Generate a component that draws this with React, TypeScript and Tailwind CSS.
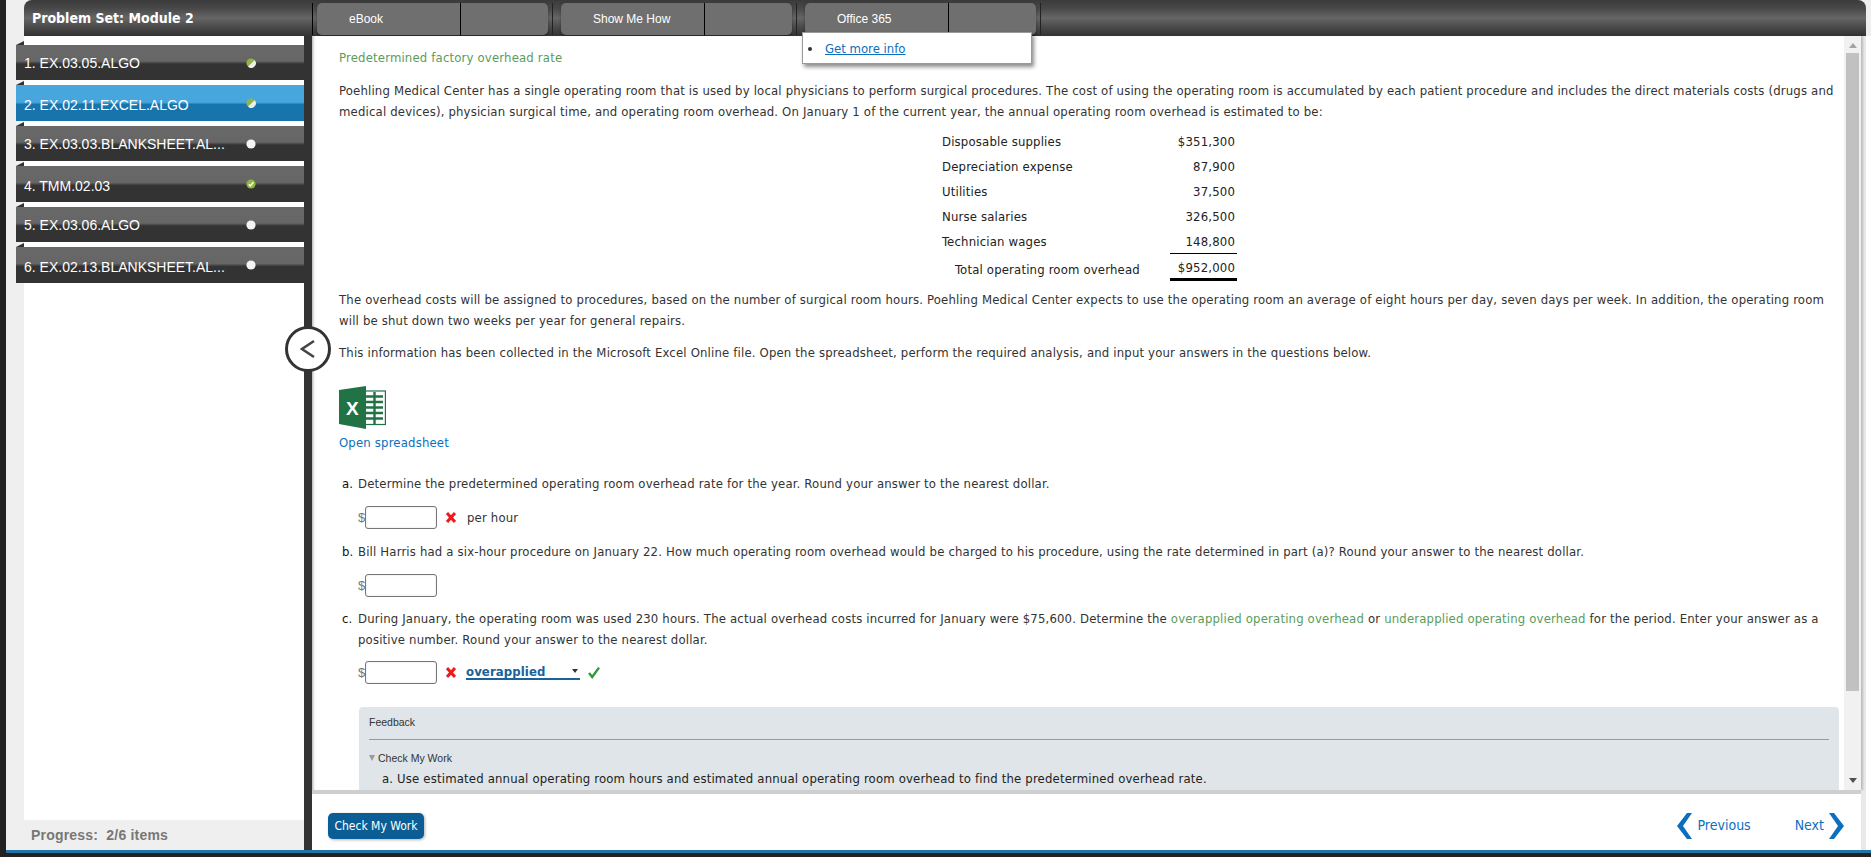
import React from "react";

const tahoma = "font-['DejaVu_Sans_Condensed','DejaVu_Sans',sans-serif]";
const arial = "font-['Liberation_Sans',Arial,sans-serif]";

function Dot({ kind }: { kind: "half" | "none" | "done" }) {
  return (
    <svg width="10" height="10" viewBox="0 0 10 10" className="shrink-0">
      {kind === "none" && <circle cx="5" cy="5" r="4.6" fill="#f4f4f4" />}
      {kind === "half" && (
        <>
          <circle cx="5" cy="5" r="4.6" fill="#8fb73e" />
          <path d="M8.6 2.2A4.6 4.6 0 0 1 2 8.6Z" fill="#eeeeee" />
        </>
      )}
      {kind === "done" && (
        <>
          <circle cx="5" cy="5" r="4.6" fill="#8fb73e" />
          <path d="M2.8 5.2L4.4 6.9L7.4 3.2" fill="none" stroke="#fff" strokeWidth="1.5" />
        </>
      )}
    </svg>
  );
}

const items: { t: string; k: "half" | "none" | "done"; h: string; pt: string; active?: boolean }[] = [
  { t: "1. EX.03.05.ALGO", k: "half", h: "h-[35px]", pt: "pt-px" },
  { t: "2. EX.02.11.EXCEL.ALGO", k: "half", h: "h-[36px]", pt: "pt-[4px]", active: true },
  { t: "3. EX.03.03.BLANKSHEET.AL...", k: "none", h: "h-[35px]", pt: "pt-px" },
  { t: "4. TMM.02.03", k: "done", h: "h-[36px]", pt: "pt-[4px]" },
  { t: "5. EX.03.06.ALGO", k: "none", h: "h-[35px]", pt: "pt-px" },
  { t: "6. EX.02.13.BLANKSHEET.AL...", k: "none", h: "h-[36px]", pt: "pt-[4px]" },
];

function SideItem({ t, k, h, pt, active }: (typeof items)[number]) {
  return (
    <div className="-ml-2 mt-[1px]">
      <div className="h-0 w-0 border-b-[4px] border-l-[8px] border-b-[#333] border-l-transparent" />
      <div
        className={`${h} flex items-center ${
          active
            ? "bg-[linear-gradient(#48a6de_0%,#48a6de_48%,#1874ad_54%,#1874ad_100%)]"
            : "bg-[linear-gradient(#686868_0%,#666666_46%,#333333_54%,#333333_100%)]"
        }`}
      >
        <div className={`w-[230px] shrink-0 pl-2 text-[14px] leading-none text-white ${pt}`}>{t}</div>
        <Dot kind={k} />
      </div>
    </div>
  );
}

function Tab({ label }: { label: string }) {
  return (
    <div className="mt-[2px] flex h-8 w-[231px] shrink-0 rounded-[5px] bg-[#6f6f6f] text-[12px] text-white shadow-[0_1px_3px_rgba(0,0,0,0.35)]">
      <div className="flex w-[144px] items-center border-r border-black pl-8">{label}</div>
    </div>
  );
}

function Sep() {
  return <div className="ml-[4px] mr-[8px] mt-[2px] h-8 w-px shrink-0 bg-[#222]" />;
}

function RedX() {
  return (
    <svg width="10" height="11" viewBox="0 0 10 11" className="shrink-0">
      <path d="M1 1L9 10M9 1L1 10" stroke="#f01a1a" strokeWidth="3" />
    </svg>
  );
}

function Answer() {
  return (
    <div className="flex items-center">
      <span className={`${arial} w-[7px] text-[13px] text-[#777]`}>$</span>
      <div className="h-[23px] w-[72px] rounded-[3px] border border-[#767676] bg-white shadow-[inset_0_0_2px_rgba(0,0,0,0.15)]" />
    </div>
  );
}

function Row({ label, v, indent, cls, tall }: { label: string; v: string; indent?: boolean; cls?: string; tall?: boolean }) {
  return (
    <tr className={tall ? "h-[27px]" : "h-[25px]"}>
      <td className={`w-[228px] p-0 ${indent ? "pl-[13px] pt-[3px]" : ""}`}>{label}</td>
      <td className={`w-[67px] p-0 pr-0.5 text-right ${tall ? "pt-[2px]" : ""} ${cls ?? ""}`}>{v}</td>
    </tr>
  );
}

function Question({ mark, className, children }: { mark: string; className: string; children: React.ReactNode }) {
  return (
    <div className={`ml-[3px] flex ${className}`}>
      <span className="w-4 shrink-0 text-[#111]">{mark}</span>
      <p className="min-w-0 flex-1">{children}</p>
    </div>
  );
}

function Excel() {
  return (
    <svg width="47" height="43" viewBox="0 0 47 43">
      <rect x="24" y="5" width="22.4" height="33.5" fill="#fff" stroke="#217346" strokeWidth="1.2" />
      <path d="M27 10.5h17M27 16h17M27 21.5h17M27 27h17M27 32.5h17M35.5 6v32" stroke="#217346" strokeWidth="2.4" />
      <path d="M0 4L27 0V43L0 38Z" fill="#217346" />
      <text x="7" y="28.5" fontSize="19" fontWeight="700" fill="#fff" fontFamily="Liberation Sans, sans-serif">X</text>
    </svg>
  );
}

export default function App() {
  return (
    <div className={`${tahoma} flex h-screen w-full flex-col overflow-hidden bg-[#222]`}>
      <div className="flex min-h-0 flex-1">
        <div className="w-[6px] shrink-0 bg-[#222]" />
        <div className="flex min-w-0 flex-1 flex-col">
          <div className="relative flex min-h-0 flex-1 flex-col bg-white">
            {/* header */}
            <div className="flex h-9 shrink-0 bg-[#efefef] pl-[18px]">
              <div className="mr-[5px] flex min-w-0 flex-1 items-center rounded-tl-lg rounded-tr-lg bg-[linear-gradient(#3a3a3a_0%,#4a4a4a_25%,#666666_50%,#4a4a4a_75%,#333333_100%)]">
                <div className="w-[288px] shrink-0 pl-2 text-[14px] font-bold text-white">Problem Set: Module 2</div>
                <div className="mt-[2px] h-8 w-px shrink-0 bg-black" />
                <div className={`${arial} ml-1 flex items-center`}>
                  <Tab label="eBook" />
                  <Sep />
                  <Tab label="Show Me How" />
                  <Sep />
                  <Tab label="Office 365" />
                  <Sep />
                </div>
              </div>
            </div>

            {/* body */}
            <div className="flex min-h-0 flex-1">
              {/* sidebar */}
              <div className="flex w-[298px] shrink-0 flex-col bg-[#efefef]">
                <div className="ml-[18px] flex min-h-0 flex-1 flex-col bg-white pt-1">
                  <div className={`${arial} flex flex-col`}>
                    {items.map((i) => (
                      <SideItem key={i.t} {...i} />
                    ))}
                  </div>
                </div>
                <div className={`${arial} flex h-[30px] shrink-0 items-center pl-[25px] text-[14px] font-bold tracking-[0.2px] text-[#777]`}>
                  Progress:&nbsp; 2/6 items
                </div>
              </div>
              <div className="w-2 shrink-0 bg-[#333]" />

              {/* main */}
              <div className="mr-[5px] flex min-w-0 flex-1 flex-col bg-[#e9e9e9] pr-[5px]">
                <div className="flex min-h-0 flex-1 bg-white shadow-[inset_3px_0_3px_-2px_rgba(0,0,0,0.35)]">
                  <div className="min-w-0 flex-1 overflow-hidden pl-[27px] pr-[2px] pt-[11px] text-[13px] leading-[21px] tracking-[0.17px] text-[#333]">
                    <p className="text-[#5b9c5b]">Predetermined factory overhead rate</p>
                    <p className="mt-[12px]">
                      Poehling Medical Center has a single operating room that is used by local physicians to perform surgical procedures. The cost of using the operating room is accumulated by each patient procedure and includes the direct materials costs (drugs and medical devices), physician surgical time, and operating room overhead. On January 1 of the current year, the annual operating room overhead is estimated to be:
                    </p>
                    <table className="ml-[603px] mt-[7px] border-separate border-spacing-0 text-[#222]">
                      <tbody>
                        <Row label="Disposable supplies" v="$351,300" />
                        <Row label="Depreciation expense" v="87,900" />
                        <Row label="Utilities" v="37,500" />
                        <Row label="Nurse salaries" v="326,500" />
                        <Row label="Technician wages" v="148,800" cls="border-b border-black" />
                        <Row label="Total operating room overhead" v="$952,000" indent tall cls="border-b-[3px] border-black" />
                      </tbody>
                    </table>
                    <p className="mt-[8px]">
                      The overhead costs will be assigned to procedures, based on the number of surgical room hours. Poehling Medical Center expects to use the operating room an average of eight hours per day, seven days per week. In addition, the operating room will be shut down two weeks per year for general repairs.
                    </p>
                    <p className="mt-[11px]">
                      This information has been collected in the Microsoft Excel Online file. Open the spreadsheet, perform the required analysis, and input your answers in the questions below.
                    </p>
                    <div className="mt-[23px] h-[43px]">
                      <Excel />
                    </div>
                    <p className="mt-[3px] text-[#0b6fc0]">Open spreadsheet</p>
                    <Question mark="a." className="mt-[20px]">
                      Determine the predetermined operating room overhead rate for the year. Round your answer to the nearest dollar.
                    </Question>
                    <div className="ml-[19px] mt-[12px] flex items-center">
                      <Answer />
                      <div className="ml-[9px]"><RedX /></div>
                      <span className="ml-[11px]">per hour</span>
                    </div>
                    <Question mark="b." className="mt-[12px]">
                      Bill Harris had a six-hour procedure on January 22. How much operating room overhead would be charged to his procedure, using the rate determined in part (a)? Round your answer to the nearest dollar.
                    </Question>
                    <div className="ml-[19px] mt-[12px] flex items-center">
                      <Answer />
                    </div>
                    <Question mark="c." className="mt-[11px]">
                      During January, the operating room was used 230 hours. The actual overhead costs incurred for January were $75,600. Determine the <span className="text-[#5b9c5b]">overapplied operating overhead</span> or <span className="text-[#5b9c5b]">underapplied operating overhead</span> for the period. Enter your answer as a positive number. Round your answer to the nearest dollar.
                    </Question>
                    <div className="ml-[19px] mt-[11px] flex items-center">
                      <Answer />
                      <div className="ml-[9px]"><RedX /></div>
                      <div className="ml-[10px] flex h-[15px] w-[114px] items-center justify-between border-b-2 border-[#1a6299] pb-px pr-0.5 text-[13px] font-bold leading-none tracking-[0.1px] text-[#1a6299]">
                        overapplied
                        <span className="h-0 w-0 border-l-[3.5px] border-r-[3.5px] border-t-[4px] border-l-transparent border-r-transparent border-t-[#333]" />
                      </div>
                      <svg width="12" height="13" viewBox="0 0 12 13" className="ml-[8px]">
                        <path d="M1 7L4.2 11L11 1.6" fill="none" stroke="#2f9a3a" strokeWidth="2.4" />
                      </svg>
                    </div>
                    <div className="ml-[20px] mr-[3px] mt-[23px] h-[120px] rounded-[4px] bg-[#dfe5e8] px-[10px]">
                      <div className={`${arial} flex h-[33px] items-center border-b border-[#999] pb-px text-[10.5px] tracking-normal text-[#333]`}>Feedback</div>
                      <div className={`${arial} mt-[13px] flex items-center text-[10.5px] leading-none tracking-normal text-[#333]`}>
                        <span className="mr-[3px] h-0 w-0 border-l-[3.5px] border-r-[3.5px] border-t-[6px] border-l-transparent border-r-transparent border-t-[#999]" />
                        Check My Work
                      </div>
                      <p className="ml-[13px] mt-[4px] text-[#222]">a. Use estimated annual operating room hours and estimated annual operating room overhead to find the predetermined overhead rate.</p>
                    </div>
                  </div>
                  {/* scrollbar */}
                  <div className="flex w-[17px] shrink-0 flex-col items-center bg-[#f1f1f1] pt-[7px] shadow-[2px_0_2px_rgba(0,0,0,0.2)]">
                    <span className="h-0 w-0 border-b-[5px] border-l-[4px] border-r-[4px] border-b-[#a3a3a3] border-l-transparent border-r-transparent" />
                    <div className="mt-[5px] h-[638px] w-[13px] bg-[#c1c1c1]" />
                    <span className="mb-[7px] mt-auto h-0 w-0 border-l-[4px] border-r-[4px] border-t-[5px] border-l-transparent border-r-transparent border-t-[#505050]" />
                  </div>
                </div>
                {/* footer */}
                <div className="flex h-[60px] shrink-0 items-center justify-between border-t-[4px] border-[#cfcfcf] bg-white pl-4 pr-[17px] pt-[7px]">
                  <button className="h-[26px] w-[96px] rounded-[5px] bg-[#0b5d95] text-[12px] leading-none text-white shadow-[1px_1px_3px_rgba(0,0,0,0.3)]">
                    Check My Work
                  </button>
                  <div className="flex items-center text-[14px] text-[#0b6fc0]">
                    <svg width="15" height="26" viewBox="0 0 15 26"><path d="M10 0H15L6 13L15 26H10L0 13Z" fill="#0b6fc0" /></svg>
                    <span className="ml-[6px]">Previous</span>
                    <span className="ml-[44px]">Next</span>
                    <svg width="15" height="26" viewBox="0 0 15 26" className="ml-[5px]"><path d="M5 0H0L9 13L0 26H5L15 13Z" fill="#0b6fc0" /></svg>
                  </div>
                </div>
              </div>
            </div>

            {/* popup */}
            <div className="absolute left-[796px] top-[32px] flex h-[32px] w-[230px] items-center border border-[#999] bg-white pl-[5px] pt-[2px] text-[13px] shadow-[2px_3px_4px_rgba(0,0,0,0.45)]">
              <span className="mr-[13px] h-[4px] w-[4px] rounded-full bg-[#333]" />
              <a className="text-[#0b6fc0] underline">Get more info</a>
            </div>

            {/* collapse */}
            <div className="absolute left-[279px] top-[326px] flex h-[46px] w-[46px] items-center justify-center rounded-full border-[3px] border-[#333] bg-white">
              <svg width="16" height="20" viewBox="0 0 16 20">
                <path d="M14 2L2 10L14 18" fill="none" stroke="#444" strokeWidth="2.5" />
              </svg>
            </div>
          </div>
          <div className="h-[3px] shrink-0 bg-[#1f74a8]" />
        </div>
      </div>
      <div className="h-[4px] shrink-0 bg-[#222]" />
    </div>
  );
}
